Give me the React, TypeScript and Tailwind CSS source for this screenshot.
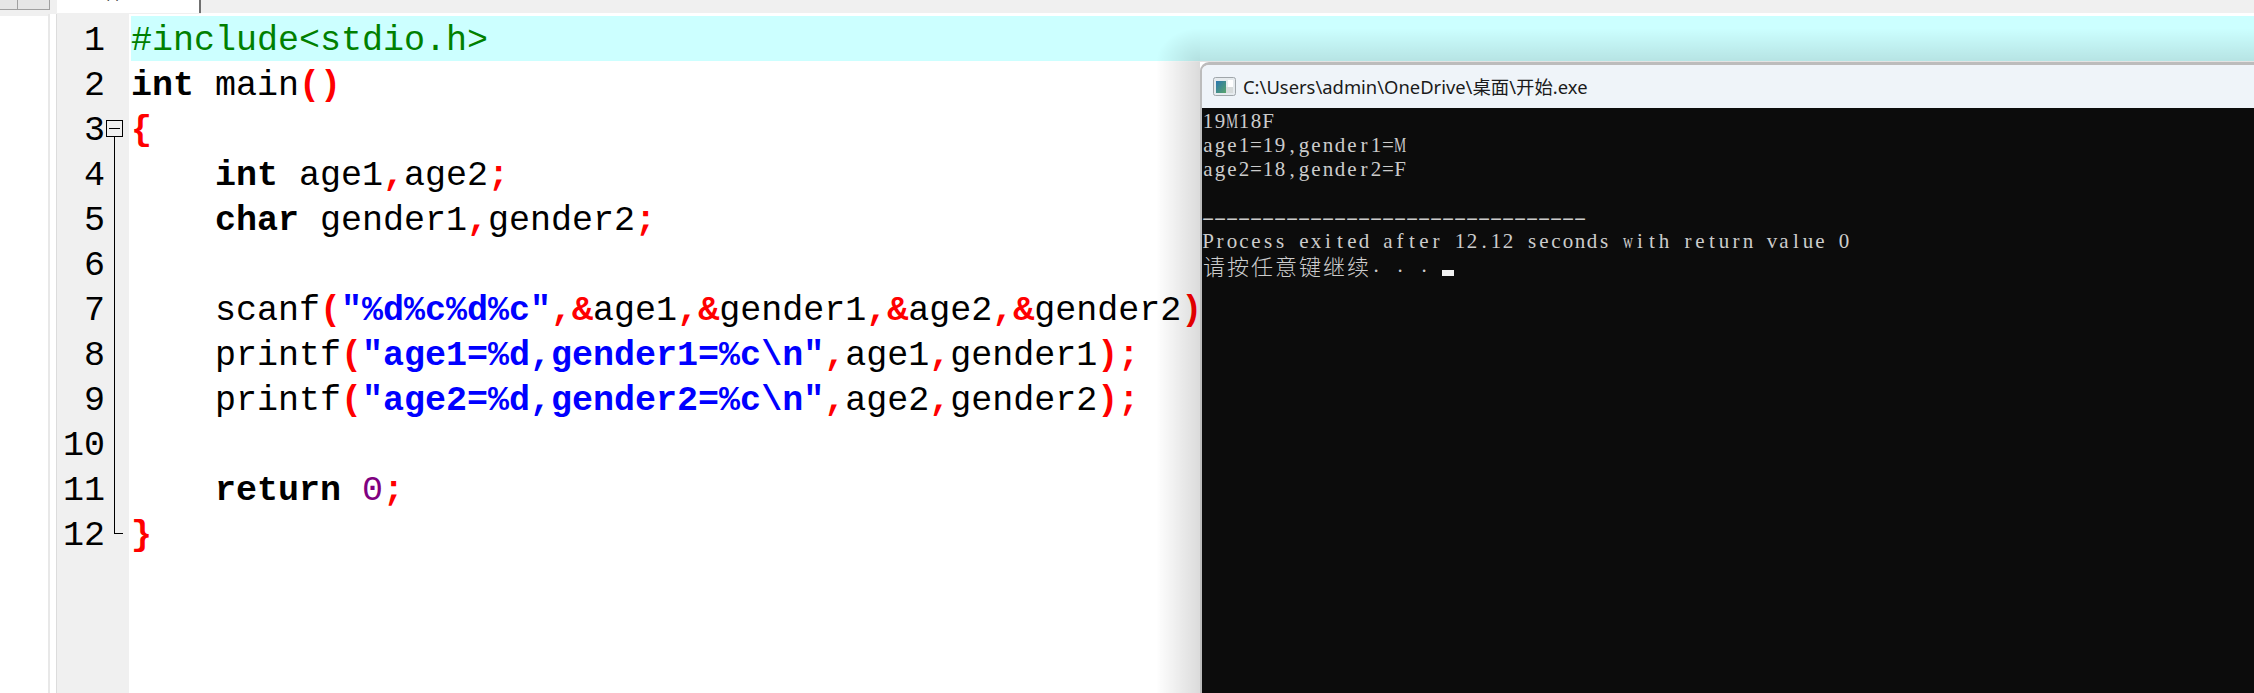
const MONO = "font-['Liberation_Mono',monospace]";

type Tok = [string, string?];
const K = "font-bold text-black";
const P = "font-bold text-[#ff0000]";
const S = "font-bold text-[#0000ff]";
const lines: Tok[][] = [
  [["#include<stdio.h>", "text-[#008000]"]],
  [["int", K], [" main"], ["()", P]],
  [["{", P]],
  [["    "], ["int", K], [" age1"], [",", P], ["age2"], [";", P]],
  [["    "], ["char", K], [" gender1"], [",", P], ["gender2"], [";", P]],
  [[" "]],
  [["    scanf"], ["(", P], ['"%d%c%d%c"', S], [",&", P], ["age1"], [",&", P], ["gender1"], [",&", P], ["age2"], [",&", P], ["gender2"], [")", P]],
  [["    printf"], ["(", P], ['"age1=%d,gender1=%c\\n"', S], [",", P], ["age1"], [",", P], ["gender1"], [");", P]],
  [["    printf"], ["(", P], ['"age2=%d,gender2=%c\\n"', S], [",", P], ["age2"], [",", P], ["gender2"], [");", P]],
  [[" "]],
  [["    "], ["return", K], [" "], ["0", "text-[#800080]"], [";", P]],
  [["}", P]],
];

function cellClass(c: string) {
  if (c.charCodeAt(0) > 255) return "inline-flex w-[24px] justify-center";
  if (c === "M" || c === "w" || c === "m") return "inline-flex w-[12px] justify-center scale-x-[0.65]";
  if (c === "-") return "inline-flex w-[12px] justify-center scale-x-[1.8]";
  return "inline-flex w-[12px] justify-center";
}

function Grid({ text }: { text: string }) {
  return (
    <>
      {Array.from(text).map((c, i) => (
        <span key={i} className={cellClass(c)}>
          {c === " " ? "\u00a0" : c}
        </span>
      ))}
    </>
  );
}

const out = [
  "19M18F",
  "age1=19,gender1=M",
  "age2=18,gender2=F",
  " ",
  "--------------------------------",
  "Process exited after 12.12 seconds with return value 0",
];

export default function App() {
  return (
    <div className="relative h-[693px] w-[2254px] overflow-hidden bg-white">
      <div className="flex h-[14px] bg-[#f0f0f0]">
        <div className="h-[10px] w-[18px] border-b border-r border-[#a0a0a0] bg-[#e6e6e6]" />
        <div className="h-[10px] w-[32px] border-b border-r border-[#a0a0a0] bg-[#e6e6e6]" />
        <div className="w-[7px] bg-[#f0f0f0]" />
        <div className="h-[13px] w-[144px] overflow-hidden border-r-2 border-[#707070] bg-white pl-[5px] font-['Liberation_Sans','Noto_Sans_CJK_SC',sans-serif] text-[16px] leading-[16px] text-[#555555]">
          <div className="-mt-[15px]">开始.cpp</div>
        </div>
        <div className="flex-1 border-b border-white" />
      </div>
      <div className="flex h-[679px]">
        <div className="w-[48px] bg-[#f0f0f0] pt-[2px]">
          <div className="h-full bg-white" />
        </div>
        <div className="w-[2px] bg-[#e8e8e8]" />
        <div className="w-[6px] bg-white" />
        <div className="w-px bg-[#dcdcdc]" />
        <div className="relative w-[72px] bg-[#f0f0f0] pt-[2px]">
          <div className={`${MONO} pr-[24px] text-right text-[35px] text-black`}>
            {lines.map((_, i) => (
              <div key={i} className="h-[45px] leading-[50px]">
                {i + 1}
              </div>
            ))}
          </div>
          <div className="absolute left-[49px] top-[106px] h-[17px] w-[17px] border border-black bg-[#f0f0f0]">
            <div className="mx-auto mt-[7px] h-px w-[11px] bg-black" />
          </div>
          <div className="absolute left-[57px] top-[123px] h-[397px] w-[9px] border-b border-l border-black" />
        </div>
        <div className={`${MONO} flex-1 whitespace-pre pl-[2px] pt-[2px] text-[35px] text-black`}>
          {lines.map((l, i) => (
            <div key={i} className={i === 0 ? "h-[45px] bg-[#ccffff] leading-[50px]" : "h-[45px] leading-[50px]"}>
              {l.map((t, j) => (
                <span key={j} className={t[1]}>
                  {t[0]}
                </span>
              ))}
            </div>
          ))}
        </div>
      </div>

      <div className="pointer-events-none absolute left-[1156px] top-[62px] h-[631px] w-[44px] bg-gradient-to-r from-transparent to-[#00000024]" />
      <div className="pointer-events-none absolute left-[1200px] top-[28px] h-[34px] w-[1054px] bg-gradient-to-b from-transparent to-[#0000001c]" />
      <div className="pointer-events-none absolute left-[1156px] top-[28px] h-[34px] w-[44px] bg-radial-[100%_100%_at_100%_100%] from-[#00000020] to-transparent" />
      <div className="absolute left-[1200px] top-[62px] flex h-[631px] w-[1054px] flex-col overflow-hidden rounded-tl-[9px] border-l-2 border-t-[3px] border-[#bcbcbc]">
        <div className="flex h-[43px] items-center gap-[7px] bg-[#eff4f9] pl-[11px] font-['Noto_Sans','Noto_Sans_CJK_SC',sans-serif] text-[18.4px] text-[#1a1a1a]">
          <svg width="23" height="19" viewBox="0 0 23 19" aria-hidden="true">
            <defs>
              <linearGradient id="g" x1="0" y1="0" x2="1" y2="1">
                <stop offset="0" stopColor="#2a76b0" />
                <stop offset="1" stopColor="#5aa56a" />
              </linearGradient>
            </defs>
            <rect x="0.5" y="0.5" width="22" height="18" rx="2" fill="#e6ebee" stroke="#a0a6aa" />
            <rect x="3" y="4" width="10" height="12" fill="url(#g)" />
            <rect x="15" y="3" width="5" height="7" fill="#ffffff" />
            <rect x="13" y="10" width="7" height="6" fill="#d8dcdc" />
          </svg>
          <span>C:\Users\admin\OneDrive\桌面\开始.exe</span>
        </div>
        <div className="flex-1 whitespace-pre bg-[#0c0c0c] pt-px font-['Liberation_Serif','Noto_Sans_CJK_SC',serif] text-[21px] leading-[24px] text-[#cccccc]">
          {out.map((t, i) => (
            <div key={i} className="h-[24px]">
              <Grid text={t} />
            </div>
          ))}
          <div className="flex h-[23px] items-start">
            <span className="font-['Noto_Sans_CJK_SC',sans-serif] text-[22px] font-light">
              <Grid text="请按任意键继续" />
            </span>
            <Grid text=". . . " />
            <div className="h-[6px] w-[12px] self-end bg-[#f2f2f2]" />
          </div>
        </div>
      </div>
    </div>
  );
}
